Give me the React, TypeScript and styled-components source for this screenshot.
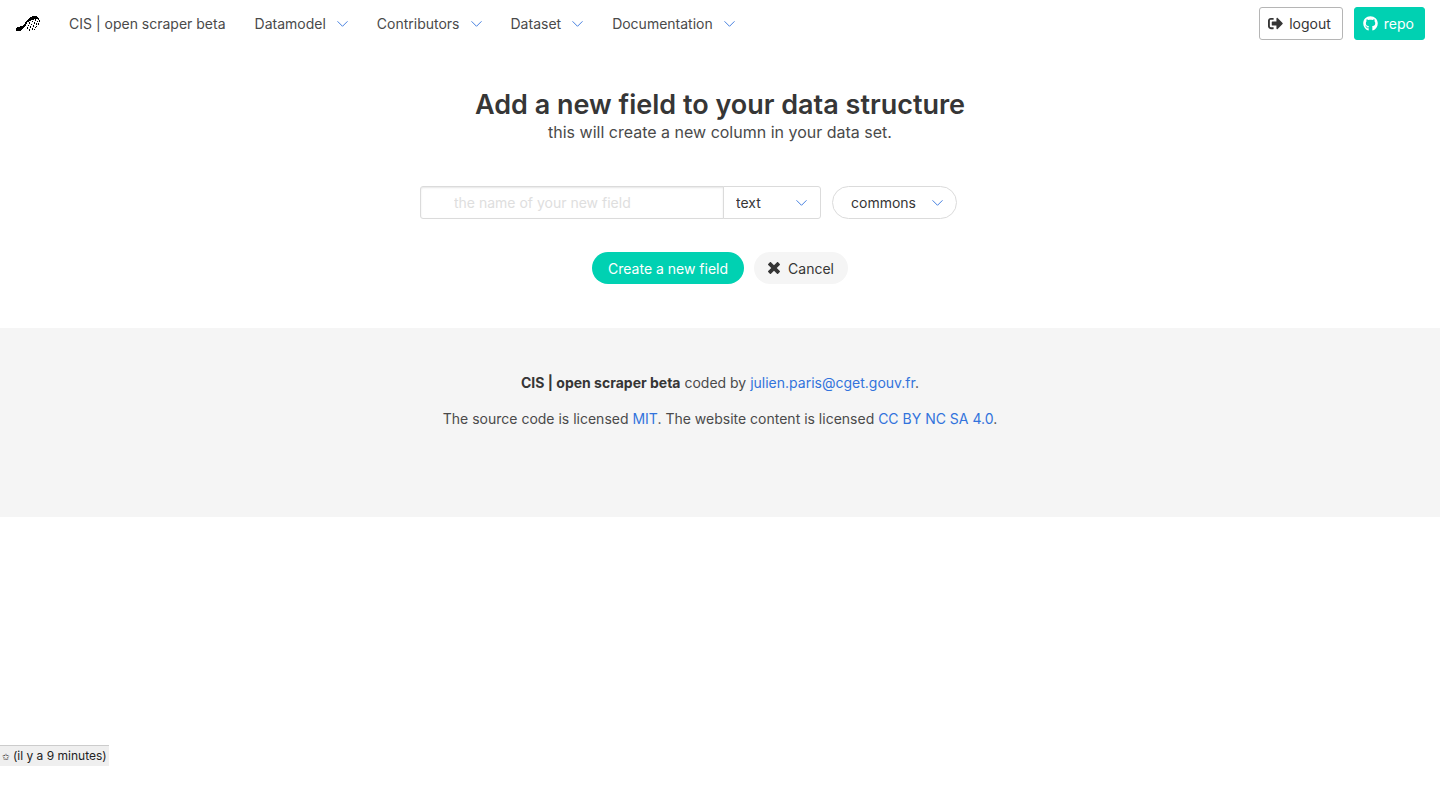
import React from "react";
import styled, { createGlobalStyle, css } from "styled-components";
import { FaGithub, FaSignOutAlt } from "react-icons/fa";

const GlobalStyle = createGlobalStyle`
  *, *::before, *::after { box-sizing: border-box; }
  body {
    margin: 0;
    background: #fff;
    color: #4a4a4a;
    font-family: Inter, "Liberation Sans", sans-serif;
    font-size: 14px;
    line-height: 21px;
  }
  button, input, select { font: inherit; margin: 0; }
  h1, p { margin: 0; }
`;

const Navbar = styled.nav`
  display: flex;
  align-items: center;
  min-height: 47px;
  padding: 0 15px;
`;

const Brand = styled.a`
  display: flex;
  margin-right: 28px;
  color: #000;
`;

const navText = css`
  color: #4a4a4a;
  text-decoration: none;
  white-space: nowrap;
`;

const NavLink = styled.a`
  ${navText}
  margin-right: 29px;
`;

const NavMenu = styled.button`
  ${navText}
  display: flex;
  align-items: center;
  gap: 11px;
  margin-right: 29px;
  padding: 0;
  border: 0;
  background: none;
  cursor: pointer;
`;

const NavEnd = styled.div`
  display: flex;
  gap: 11px;
  margin-left: auto;
`;

const NavButton = styled.a<{ $primary?: boolean }>`
  display: flex;
  align-items: center;
  gap: 6px;
  height: 33px;
  padding: 0 ${(p) => (p.$primary ? 10 : 11)}px 0 8px;
  border: 1px solid ${(p) => (p.$primary ? "#00d1b2" : "#b5b5b5")};
  border-radius: 3px;
  background: ${(p) => (p.$primary ? "#00d1b2" : "#fff")};
  color: ${(p) => (p.$primary ? "#fff" : "#363636")};
  text-decoration: none;
`;

const Main = styled.main`
  display: flex;
  flex-direction: column;
  align-items: center;
  padding: 42px 20px 44px;
`;

const Title = styled.h1`
  color: #363636;
  font-size: 27px;
  font-weight: 600;
  line-height: 32px;
  text-align: center;
`;

const Subtitle = styled.p`
  font-size: 16px;
  line-height: 22px;
  text-align: center;
`;

const Form = styled.form`
  width: 100%;
  max-width: 600px;
  margin-top: 43px;
`;

const Fields = styled.div`
  display: flex;
  gap: 11px;
`;

const Joined = styled.div`
  display: flex;
`;

const NameInput = styled.input`
  width: 304px;
  height: 33px;
  padding: 0 33px;
  border: 1px solid #dbdbdb;
  border-radius: 3px 0 0 3px;
  box-shadow: inset 0 1px 2px rgba(10, 10, 10, 0.1);
  color: #363636;
  outline: none;
  &::placeholder { color: #dedede; opacity: 1; }
`;

const SelectBox = styled.div<{ $rounded?: boolean }>`
  position: relative;
  width: ${(p) => (p.$rounded ? 125 : 98)}px;
  margin-left: ${(p) => (p.$rounded ? 0 : -1)}px;

  select {
    appearance: none;
    display: block;
    width: 100%;
    height: 33px;
    padding: 0 ${(p) => (p.$rounded ? 36 : 32)}px 0 ${(p) => (p.$rounded ? 18 : 12)}px;
    border: 1px solid #dbdbdb;
    border-radius: ${(p) => (p.$rounded ? "17px" : "0 3px 3px 0")};
    background: #fff;
    color: #363636;
  }

  svg {
    position: absolute;
    top: 14px;
    right: 14px;
    pointer-events: none;
  }
`;

const Actions = styled.div`
  display: flex;
  justify-content: center;
  gap: 10px;
  margin-top: 33px;
`;

const PillButton = styled.button<{ $primary?: boolean }>`
  display: flex;
  align-items: center;
  gap: 8px;
  height: 32px;
  padding: 0 ${(p) => (p.$primary ? 16 : 14)}px;
  border: 0;
  border-radius: 16px;
  background: ${(p) => (p.$primary ? "#00d1b2" : "#f5f5f5")};
  color: ${(p) => (p.$primary ? "#fff" : "#363636")};
  cursor: pointer;
`;

const Footer = styled.footer`
  display: flex;
  flex-direction: column;
  gap: 15px;
  padding: 44px 20px 88px;
  background: #f5f5f5;
  text-align: center;

  strong { color: #363636; font-weight: 700; }
  a { color: #3273dc; text-decoration: none; }
`;

const Status = styled.aside`
  position: fixed;
  left: 0;
  bottom: 22px;
  height: 21px;
  padding: 0 2px;
  border-top: 1px solid #ccc;
  background: #efefef;
  color: #222;
  font-size: 12px;
  line-height: 20px;

  span { font: 9px "DejaVu Sans", sans-serif; }
`;

const Chevron = () => (
  <svg width="11" height="6" viewBox="0 0 11 6" fill="none" stroke="#3273dc" aria-hidden="true">
    <path d="M.5.3 5.5 5.3l5-5" strokeWidth=".9" />
  </svg>
);

const Cross = () => (
  <svg width="12" height="16" viewBox="0 0 384 512" fill="currentColor" aria-hidden="true">
    <path d="M323.1 441l53.9-53.9c9.4-9.4 9.4-24.5 0-33.9L279.8 256l97.2-97.2c9.4-9.4 9.4-24.5 0-33.9L323.1 71c-9.4-9.4-24.5-9.4-33.9 0L192 168.2 94.8 71c-9.4-9.4-24.5-9.4-33.9 0L7 124.9c-9.4 9.4-9.4 24.5 0 33.9l97.2 97.2L7 353.2c-9.4 9.4-9.4 24.5 0 33.9L60.9 441c9.4 9.4 24.5 9.4 33.9 0l97.2-97.2 97.2 97.2c9.3 9.3 24.5 9.3 33.9 0z" />
  </svg>
);

const Logo = () => (
  <svg width="26" height="17" viewBox="0 0 26 17" fill="currentColor" shapeRendering="crispEdges" role="img" aria-label="Open scraper">
    <path d="M17 1h5v1h1v1h1v1h-5v1h-3v1h-2v1h-2v2h-1v2h-1v1H9v1H8v1H7v1H6v1H1v-3h1v-1h3v-1h3v-1h1V9h1V7h1V6h1V5h1V4h1V3h1V2h2z" />
    <path d="M20 4h1v2h-1zM23 4h1v1h-1zM24 5h1v2h-1zM17 6h1v1h-1zM22 6h1v1h-1zM14 7h1v2h-1zM19 7h1v2h-1zM16 9h1v1h-1zM21 8h1v2h-1zM23 8h1v2h-1zM13 10h1v1h-1zM18 10h1v2h-1zM21 11h1v1h-1zM15 11h1v2h-1zM12 12h1v2h-1zM17 13h1v2h-1zM20 12h1v1h-1zM14 14h1v2h-1zM19 14h1v1h-1z" />
  </svg>
);

export default function App() {
  return (
    <>
      <GlobalStyle />
      <Navbar aria-label="Main">
        <Brand href="#"><Logo /></Brand>
        <NavLink href="#">CIS | open scraper beta</NavLink>
        {["Datamodel", "Contributors", "Dataset", "Documentation"].map((name) => (
          <NavMenu key={name} type="button">{name}<Chevron /></NavMenu>
        ))}
        <NavEnd>
          <NavButton href="#"><FaSignOutAlt size={15} />logout</NavButton>
          <NavButton href="#" $primary><FaGithub size={15} />repo</NavButton>
        </NavEnd>
      </Navbar>
      <Main>
        <Title>Add a new field to your data structure</Title>
        <Subtitle>this will create a new column in your data set.</Subtitle>
        <Form onSubmit={(e) => e.preventDefault()}>
          <Fields>
            <Joined>
              <NameInput aria-label="Field name" placeholder="the name of your new field" />
              <SelectBox>
                <select aria-label="Field type"><option>text</option></select>
                <Chevron />
              </SelectBox>
            </Joined>
            <SelectBox $rounded>
              <select aria-label="Visibility"><option>commons</option></select>
              <Chevron />
            </SelectBox>
          </Fields>
          <Actions>
            <PillButton type="submit" $primary>Create a new field</PillButton>
            <PillButton type="button"><Cross />Cancel</PillButton>
          </Actions>
        </Form>
      </Main>
      <Footer>
        <p><strong>CIS | open scraper beta</strong> coded by <a href="#">julien.paris@cget.gouv.fr</a>.</p>
        <p>The source code is licensed <a href="#">MIT</a>. The website content is licensed <a href="#">CC BY NC SA 4.0</a>.</p>
      </Footer>
      <Status><span>✩</span> (il y a 9 minutes)</Status>
    </>
  );
}
